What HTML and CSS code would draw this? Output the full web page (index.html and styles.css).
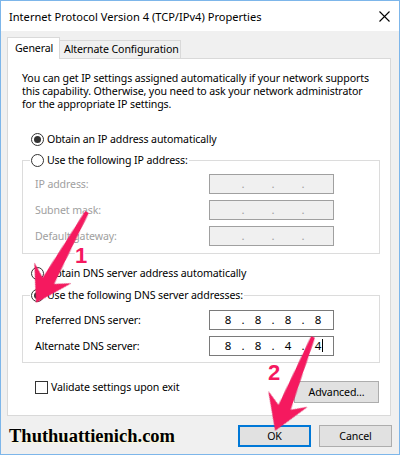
FILE: index.html
```html
<!DOCTYPE html>
<html>
<head>
<meta charset="utf-8">
<link rel="stylesheet" href="styles.css">
</head>
<body>
<div class="window">
  <div class="titlebar">
    <span class="title">Internet Protocol Version 4 (TCP/IPv4) Properties</span>
    <svg class="close" viewBox="0 0 11 11" width="11" height="11"><path d="M0.5 0.5 L10.5 10.5 M10.5 0.5 L0.5 10.5" stroke="#000" stroke-width="1.1" fill="none"/></svg>
  </div>
  <div class="main">
    <div class="tabs">
      <div class="tab active">General</div>
      <div class="tab alt">Alternate Configuration</div>
    </div>
    <div class="panel">
      <p class="intro">You can get IP settings assigned automatically if your network supports<br>this capability. Otherwise, you need to ask your network administrator<br>for the appropriate IP settings.</p>
      <div class="opt r1"><span class="radio checked"></span><span>Obtain an IP address automatically</span></div>
      <fieldset class="group g1">
        <legend><span class="opt legend-in"><span class="radio"></span><span>Use the following IP address:</span></span></legend>
        <div class="field disabled"><span class="label">IP address:</span><span class="ipbox"><span class="seg"></span><span class="dot">.</span><span class="seg"></span><span class="dot">.</span><span class="seg"></span><span class="dot">.</span><span class="seg"></span></span></div>
        <div class="field disabled"><span class="label">Subnet mask:</span><span class="ipbox"><span class="seg"></span><span class="dot">.</span><span class="seg"></span><span class="dot">.</span><span class="seg"></span><span class="dot">.</span><span class="seg"></span></span></div>
        <div class="field disabled"><span class="label">Default gateway:</span><span class="ipbox"><span class="seg"></span><span class="dot">.</span><span class="seg"></span><span class="dot">.</span><span class="seg"></span><span class="dot">.</span><span class="seg"></span></span></div>
      </fieldset>
      <div class="opt r3"><span class="radio"></span><span>Obtain DNS server address automatically</span></div>
      <fieldset class="group g2">
        <legend><span class="opt legend-in"><span class="radio checked"></span><span>Use the following DNS server addresses:</span></span></legend>
        <div class="field"><span class="label">Preferred DNS server:</span><span class="ipbox"><span class="seg">8</span><span class="dot">.</span><span class="seg">8</span><span class="dot">.</span><span class="seg">8</span><span class="dot">.</span><span class="seg">8</span></span></div>
        <div class="field"><span class="label">Alternate DNS server:</span><span class="ipbox"><span class="seg">8</span><span class="dot">.</span><span class="seg">8</span><span class="dot">.</span><span class="seg">4</span><span class="dot">.</span><span class="seg">4<span class="caret"></span></span></span></div>
      </fieldset>
      <div class="bottom">
        <div class="check-row"><span class="checkbox"></span><span>Validate settings upon exit</span></div>
        <button class="btn adv">Advanced...</button>
      </div>
    </div>
    <div class="footer">
      <span class="watermark">Thuthuattienich.com</span>
      <button class="btn ok">OK</button>
      <button class="btn cancel">Cancel</button>
    </div>
  </div>
  <svg class="annot" width="400" height="455" viewBox="0 0 400 455">
    <path class="arrow" transform="translate(87 212) rotate(119.3)" d="M0,-2 Q40,-4 79,-6.5 L70,-21 L104,0 L70,21 L79,6.5 Q40,4 0,2 Z"/>
    <path class="arrow" transform="translate(313 337) rotate(112)" d="M0,-2 Q38,-4 76,-6.5 L67,-21 L101,0 L67,21 L76,6.5 Q38,4 0,2 Z"/>
    <text class="num" x="75" y="263">1</text>
    <text class="num" x="268" y="380">2</text>
  </svg>
</div>
</body>
</html>
```

FILE: styles.css
```css
html, body {
  margin: 0;
  padding: 0;
}
body {
  width: 400px;
  height: 455px;
  overflow: hidden;
  font-family: "Noto Sans", "DejaVu Sans", sans-serif;
  font-size: 10.6px;
  letter-spacing: -0.12px;
  color: #000;
}
.window {
  position: relative;
  width: 400px;
  height: 455px;
  box-sizing: border-box;
  border: 1px solid #7db6ea;
  background: #f0f0f0;
  display: flex;
  flex-direction: column;
  overflow: hidden;
}
.titlebar {
  flex: none;
  height: 30px;
  background: #fff;
  display: flex;
  align-items: center;
  justify-content: space-between;
  padding: 0 9px 0 8px;
}
.title {
  font-size: 11.1px;
  letter-spacing: 0;
  line-height: 15px;
  color: #000;
  white-space: nowrap;
}
.close {
  display: block;
}
.main {
  padding: 6px 8px 0 6px;
}
.tabs {
  display: flex;
  align-items: flex-end;
  height: 21px;
}
.tab {
  box-sizing: border-box;
  border: 1px solid #d9d9d9;
  border-bottom: none;
  line-height: 15px;
  white-space: nowrap;
}
.tab.active {
  width: 53px;
  height: 22px;
  margin-bottom: -1px;
  background: #fff;
  position: relative;
  z-index: 1;
  padding: 3px 0 0 7px;
}
.tab.alt {
  width: 122px;
  height: 18px;
  margin-left: -1px;
  background: #f0f0f0;
  padding: 1px 0 0 4px;
}
.panel {
  background: #fff;
  border: 1px solid #d9d9d9;
  padding: 0 10px 12px 14px;
}
.intro {
  margin: 13px 0 0;
  line-height: 13px;
  white-space: nowrap;
}
.opt {
  display: flex;
  align-items: center;
  gap: 3px;
  height: 15px;
  line-height: 15px;
  padding-left: 9px;
  white-space: nowrap;
}
.r1 {
  margin-top: 21px;
}
.r3 {
  margin-top: 12px;
}
.radio {
  flex: none;
  width: 13px;
  height: 13px;
  box-sizing: border-box;
  border: 1px solid #333;
  border-radius: 50%;
  background: #fff;
  display: flex;
  align-items: center;
  justify-content: center;
}
.radio.checked::after {
  content: "";
  width: 7px;
  height: 7px;
  border-radius: 50%;
  background: #333;
}
.group {
  margin: 6px 0 0;
  padding: 0 0 7px;
  border: 1px solid #dcdcdc;
  min-width: 0;
}
.g2 {
  margin-top: 7px;
  padding-bottom: 6px;
}
.group legend {
  padding: 0 1px;
  margin-left: 7px;
}
.legend-in {
  padding-left: 0;
}
.field {
  display: flex;
  align-items: center;
  height: 20px;
  padding-left: 12px;
  margin-top: 6px;
}
.g2 .field:first-of-type {
  margin-top: 7px;
}
.label {
  width: 174px;
  flex: none;
  line-height: 15px;
  white-space: nowrap;
}
.disabled .label {
  color: #a0a0a0;
}
.ipbox {
  width: 125px;
  height: 20px;
  box-sizing: border-box;
  border: 1px solid #7a7a7a;
  background: #fff;
  display: flex;
  align-items: center;
  padding-left: 6px;
  line-height: 16px;
  font-size: 11.5px;
  letter-spacing: 0;
}
.disabled .ipbox {
  background: #f0f0f0;
  border-color: #a0a0a0;
  color: #a0a0a0;
}
.seg {
  width: 24px;
  text-align: center;
  height: 16px;
}
.dot {
  width: 6px;
  text-align: center;
  height: 16px;
}
.caret {
  display: inline-block;
  width: 1px;
  height: 13px;
  background: #000;
  margin-left: 1px;
  margin-right: -2px;
  vertical-align: -2px;
}
.bottom {
  display: flex;
  justify-content: space-between;
  align-items: flex-start;
  margin-top: 18px;
}
.check-row {
  display: flex;
  align-items: center;
  gap: 3px;
  height: 13px;
  line-height: 13px;
  padding-left: 13px;
  white-space: nowrap;
}
.checkbox {
  width: 13px;
  height: 13px;
  box-sizing: border-box;
  border: 1px solid #333;
  background: #fff;
}
.btn {
  font-family: inherit;
  font-size: 10.6px;
  letter-spacing: -0.12px;
  color: #000;
  height: 22px;
  box-sizing: border-box;
  background: #e1e1e1;
  border: 1px solid #adadad;
  padding: 0;
  margin: 0;
  line-height: 18px;
}
.adv {
  width: 85px;
  margin-right: 1px;
}
.footer {
  display: flex;
  align-items: center;
  padding-top: 9px;
}
.watermark {
  margin-left: 2px;
  font-family: "Liberation Serif", "Times New Roman", serif;
  font-weight: bold;
  font-size: 18.5px;
  letter-spacing: 0;
  line-height: 22px;
  color: #000;
  white-space: nowrap;
  text-shadow: 0 0 2px #fff, 1px 1px 1px #fff7c0;
}
.ok {
  margin-left: auto;
  width: 73px;
  border: 2px solid #0078d7;
}
.cancel {
  width: 73px;
  margin-left: 8px;
  margin-right: -1px;
}
.annot {
  position: absolute;
  top: -1px;
  left: -1px;
  pointer-events: none;
}
.arrow {
  fill: #f5195f;
  filter: drop-shadow(0.5px 0.5px 0.6px rgba(120, 0, 40, 0.45));
}
.num {
  font-family: "Liberation Sans", Arial, sans-serif;
  font-weight: bold;
  font-size: 22px;
  letter-spacing: 0;
  fill: #f5195f;
  stroke: #fff;
  stroke-width: 3px;
  paint-order: stroke;
}
```
